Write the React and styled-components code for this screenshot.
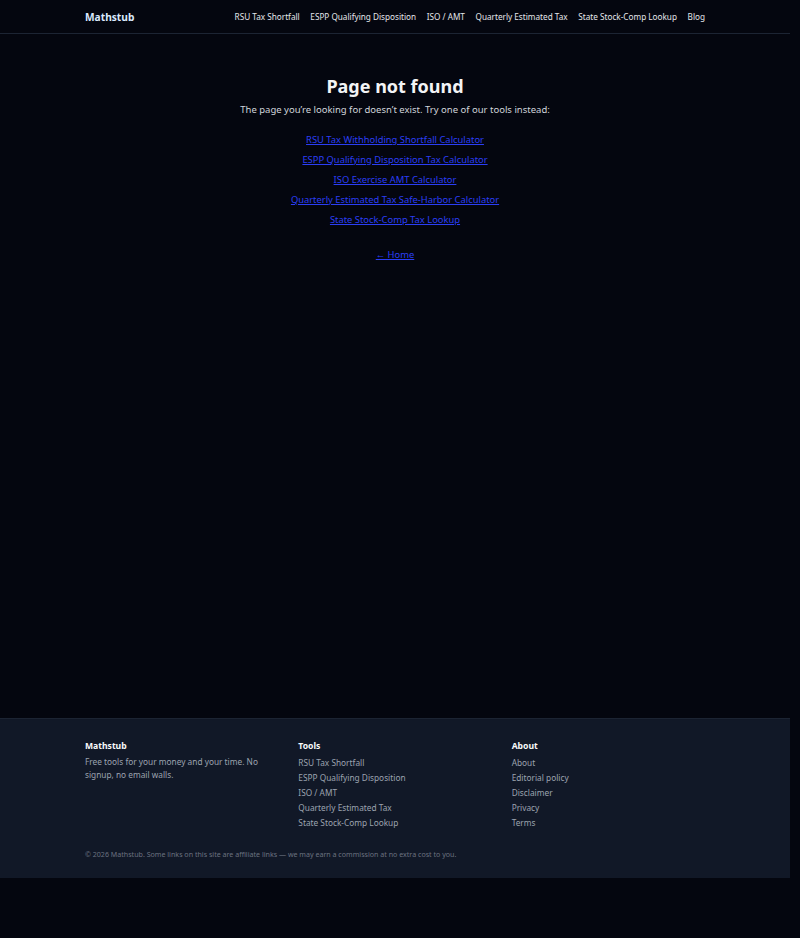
import React from 'react'
import styled, { createGlobalStyle } from 'styled-components'

const Global = createGlobalStyle`
  html, body {
    margin: 0;
    background: #04060f;
  }
  body {
    font-family: "Noto Sans", "Open Sans", sans-serif;
    color: #e5e7eb;
  }
`

const Page = styled.div`
  width: 790px;
  display: flex;
  flex-direction: column;
`

const Header = styled.header`
  height: 33px;
  border-bottom: 1px solid #1c2433;
`

const HeaderInner = styled.div`
  width: 620px;
  height: 100%;
  margin: 0 auto;
  display: flex;
  align-items: center;
  justify-content: space-between;
`

const Logo = styled.a`
  font-size: 10.2px;
  font-weight: 700;
  color: #dbeafe;
  text-decoration: none;
`

const Nav = styled.nav`
  display: flex;
  gap: 10.6px;
`

const NavItem = styled.a`
  font-size: 8.2px;
  color: #e5e7eb;
  text-decoration: none;
`

const Main = styled.main`
  height: 684px;
  text-align: center;
  padding-top: 38px;
  box-sizing: border-box;
`

const Title = styled.h1`
  margin: 0;
  font-size: 18px;
  font-weight: 700;
  color: #f3f4f6;
  line-height: 28px;
`

const Lead = styled.p`
  margin: 2px 0 12px;
  font-size: 9.5px;
  line-height: 16px;
  color: #d1d5db;
`

const ToolList = styled.ul`
  list-style: none;
  margin: 0;
  padding: 0;
`

const ToolItem = styled.li`
  line-height: 20px;
  font-size: 9.4px;
`

const BlueLink = styled.a`
  color: #2b3ef5;
  text-decoration: underline;
`

const HomeLine = styled.p`
  margin: 15px 0 0;
  font-size: 9.4px;
  line-height: 20px;
`

const Footer = styled.footer`
  background: #111827;
  border-top: 1px solid #1c2433;
  padding: 21px 0 19px;
`

const FooterInner = styled.div`
  width: 620px;
  margin: 0 auto;
`

const Columns = styled.div`
  display: grid;
  grid-template-columns: repeat(3, 1fr);
  gap: 20px;
`

const ColTitle = styled.h4`
  margin: 0 0 3px;
  font-size: 8.6px;
  font-weight: 700;
  color: #f9fafb;
  line-height: 12px;
`

const ColText = styled.p`
  margin: 0;
  font-size: 8.3px;
  line-height: 13px;
  color: #9ca3af;
  width: 180px;
`

const ColList = styled.ul`
  list-style: none;
  margin: 0;
  padding: 0;
`

const ColLink = styled.li`
  font-size: 8.3px;
  line-height: 15px;
  color: #9ca3af;
`

const Copy = styled.p`
  margin: 19px 0 0;
  font-size: 7.1px;
  line-height: 10px;
  color: #6b7280;
`

const tools = [
  'RSU Tax Withholding Shortfall Calculator',
  'ESPP Qualifying Disposition Tax Calculator',
  'ISO Exercise AMT Calculator',
  'Quarterly Estimated Tax Safe-Harbor Calculator',
  'State Stock-Comp Tax Lookup',
]

const short = [
  'RSU Tax Shortfall',
  'ESPP Qualifying Disposition',
  'ISO / AMT',
  'Quarterly Estimated Tax',
  'State Stock-Comp Lookup',
]

const about = ['About', 'Editorial policy', 'Disclaimer', 'Privacy', 'Terms']

export default function App() {
  return (
    <Page>
      <Global />
      <Header>
        <HeaderInner>
          <Logo href="#">Mathstub</Logo>
          <Nav>
            {short.map((t) => (
              <NavItem key={t} href="#">{t}</NavItem>
            ))}
            <NavItem href="#">Blog</NavItem>
          </Nav>
        </HeaderInner>
      </Header>
      <Main>
        <Title>Page not found</Title>
        <Lead>The page you’re looking for doesn’t exist. Try one of our tools instead:</Lead>
        <ToolList>
          {tools.map((t) => (
            <ToolItem key={t}><BlueLink href="#">{t}</BlueLink></ToolItem>
          ))}
        </ToolList>
        <HomeLine><BlueLink href="#">← Home</BlueLink></HomeLine>
      </Main>
      <Footer>
        <FooterInner>
          <Columns>
            <div>
              <ColTitle>Mathstub</ColTitle>
              <ColText>Free tools for your money and your time. No signup, no email walls.</ColText>
            </div>
            <div>
              <ColTitle>Tools</ColTitle>
              <ColList>
                {short.map((t) => <ColLink key={t}>{t}</ColLink>)}
              </ColList>
            </div>
            <div>
              <ColTitle>About</ColTitle>
              <ColList>
                {about.map((t) => <ColLink key={t}>{t}</ColLink>)}
              </ColList>
            </div>
          </Columns>
          <Copy>© 2026 Mathstub. Some links on this site are affiliate links — we may earn a commission at no extra cost to you.</Copy>
        </FooterInner>
      </Footer>
    </Page>
  )
}
